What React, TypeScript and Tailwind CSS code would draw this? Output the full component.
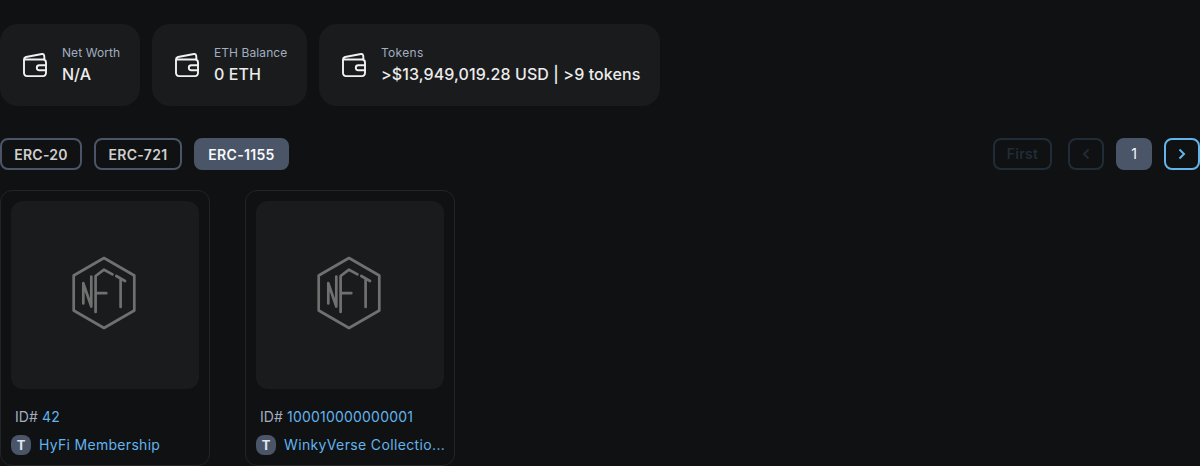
import React from 'react';

const inter = "font-['Inter',sans-serif]";

function WalletIcon() {
  return (
    <svg className="h-[30px] w-[30px] shrink-0" viewBox="0 0 30 30" fill="none" stroke="#f0f2f0" strokeWidth="1.9" strokeLinejoin="round" strokeLinecap="round">
      <path d="M4 9.500h19a3 3 0 0 1 3 3v10.600a3 3 0 0 1-3 3H7a3 3 0 0 1-3-3V9.500c0-1.500.6-2.100 2-2.500L22 4a2 2 0 0 1 2.200 1.600l.3 4.400" />
      <path d="M26 15.300h-6.700a2.500 2.500 0 0 0 0 5H26" />
    </svg>
  );
}

function Stat({ label, value, width, labelSpacing, valueSpacing }: { label: string; value: string; width: string; labelSpacing: string; valueSpacing: string }) {
  return (
    <div className={`flex h-[82px] items-center gap-3 rounded-[18px] bg-[#1a1b1c] pl-5 ${width}`}>
      <WalletIcon />
      <div className="whitespace-nowrap pt-px">
        <p className={`text-xs leading-4 text-[#a0aec0] ${labelSpacing}`}>{label}</p>
        <p className={`mt-px text-base font-medium leading-6 text-[#ececec] ${valueSpacing}`}>{value}</p>
      </div>
    </div>
  );
}

function NftIcon() {
  return (
    <svg className="h-[74px] w-[66px]" viewBox="0 0 66 74" fill="none" stroke="#707070" strokeWidth="2.7" strokeLinecap="round" strokeLinejoin="round">
      <path d="M33 2 63.300 19.500v35L33 72 2.700 54.500v-35z" />
      <path d="M12.300 47.500V27.200L20.300 50.500V20.500" />
      <path d="M24.600 56V20L33 13.700l8.500 4.700M24.600 37.200h10.700" />
      <path d="m45.300 20 8.700 5M49.600 23v28" />
    </svg>
  );
}

function NftCard({ id, name, nameSpacing }: { id: string; name: string; nameSpacing: string }) {
  return (
    <article className="h-[276px] w-[210px] rounded-xl border border-[#232425] p-[10px]">
      <div className="flex h-[188px] items-center justify-center rounded-xl bg-[#1a1b1c] pr-[2px] pb-[4px]">
        <NftIcon />
      </div>
      <p className="mt-[18px] ml-1 text-sm leading-5 tracking-[0.1px] text-[#a0aec0]">
        ID# <a className="tracking-[0.2px] text-[#63b3ed]">{id}</a>
      </p>
      <div className="mt-2 flex items-center gap-2">
        <span className="flex h-5 w-5 shrink-0 items-center justify-center rounded-lg bg-[#4a5568] text-[13px] font-bold leading-5 text-[#e2e8f0]">T</span>
        <a className={`whitespace-nowrap text-sm leading-5 text-[#63b3ed] ${nameSpacing}`}>{name}</a>
      </div>
    </article>
  );
}

const tab = 'flex h-8 items-center justify-center rounded-lg border-2 text-sm font-semibold';

export default function App() {
  return (
    <main className={`h-[466px] overflow-hidden bg-[#101112] pt-6 ${inter}`}>
      <section className="flex gap-3">
        <Stat label="Net Worth" value="N/A" width="w-[140px]" labelSpacing="tracking-[0.08px]" valueSpacing="tracking-normal" />
        <Stat label="ETH Balance" value="0 ETH" width="w-[155px]" labelSpacing="tracking-[0.08px]" valueSpacing="tracking-[0.1px]" />
        <Stat label="Tokens" value=">$13,949,019.28 USD | >9 tokens" width="w-[341px]" labelSpacing="tracking-[0.3px]" valueSpacing="tracking-[0.1px]" />
      </section>
      <nav className="mt-8 flex items-center justify-between">
        <div className="flex gap-3">
          <button className={`${tab} w-[82px] border-[#4a5568] pt-[2px] tracking-[0.25px] text-[#cfcfcf]`}>ERC-20</button>
          <button className={`${tab} w-[88px] border-[#4a5568] pt-[2px] tracking-[0.3px] text-[#cfcfcf]`}>ERC-721</button>
          <button className={`${tab} w-[95px] border-[#4a5568] bg-[#4a5568] pt-[2px] tracking-[0.3px] text-[#f7fafc]`}>ERC-1155</button>
        </div>
        <div className="flex">
          <button className={`${tab} w-[59px] border-[#202d38] tracking-[0.25px] text-[#202d38]`}>First</button>
          <button className={`${tab} ml-4 w-9 border-[#202d38] text-[#202d38]`}>
            <svg className="h-5 w-5" viewBox="0 0 20 20" fill="none" stroke="currentColor" strokeWidth="2"><path d="m12.500 5.500-4.500 4.500 4.500 4.500" /></svg>
          </button>
          <button className="ml-3 flex h-8 w-9 items-center justify-center rounded-lg bg-[#4a5568] text-sm text-[#f7fafc]">1</button>
          <button className={`${tab} ml-3 w-9 border-[#63b3ed] text-[#63b3ed]`}>
            <svg className="h-5 w-5" viewBox="0 0 20 20" fill="none" stroke="currentColor" strokeWidth="2"><path d="m7.500 5.500 4.500 4.500-4.500 4.500" /></svg>
          </button>
        </div>
      </nav>
      <section className="mt-5 flex gap-[35px]">
        <NftCard id="42" name="HyFi Membership" nameSpacing="tracking-[0.3px]" />
        <NftCard id="100010000000001" name="WinkyVerse Collectio..." nameSpacing="tracking-[0.36px]" />
      </section>
    </main>
  );
}
